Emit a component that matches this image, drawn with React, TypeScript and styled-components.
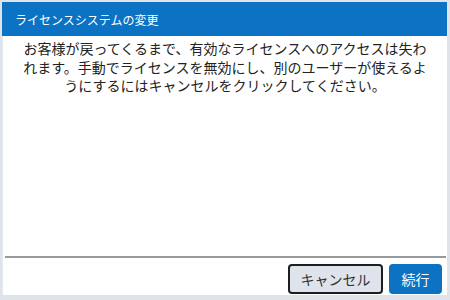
import React from 'react';
import styled, { createGlobalStyle } from 'styled-components';

const GlobalStyle = createGlobalStyle`
  html, body {
    margin: 0;
    padding: 0;
    background: #dfe3ea;
  }
  body {
    font-family: "Noto Sans CJK JP", "Noto Sans", sans-serif;
  }
`;

const Frame = styled.div`
  width: 450px;
  height: 300px;
  padding: 2px 3px 5px 2px;
  box-sizing: border-box;
`;

const Window = styled.div`
  height: 100%;
  display: flex;
  flex-direction: column;
  background: #ffffff;
  border-left: 1px solid #e4e9f2;
`;

const Header = styled.div`
  height: 34px;
  flex: none;
  display: flex;
  align-items: center;
  padding-left: 13px;
  margin-left: -1px;
  background: #0b72c4;
  color: #ffffff;
  font-size: 12px;
`;

const Body = styled.div`
  flex: 1;
  padding: 3px 0 0;
`;

const Message = styled.p`
  width: 410px;
  margin: 0 auto;
  text-align: center;
  font-size: 14px;
  line-height: 18.5px;
  color: #222222;
`;

const Divider = styled.div`
  height: 2px;
  margin: 0 1px 0 2px;
  background: #999999;
`;

const Footer = styled.div`
  display: flex;
  justify-content: flex-end;
  gap: 6px;
  padding: 6px 5px 1px 0;
`;

const Button = styled.button<{ $primary?: boolean }>`
  height: 30px;
  padding: 0;
  width: ${p => (p.$primary ? '53px' : '95px')};
  border-radius: 4px;
  border: 2px solid ${p => (p.$primary ? '#0b72c4' : '#1e1e1e')};
  background: ${p => (p.$primary ? '#0b72c4' : '#dfe3ec')};
  color: ${p => (p.$primary ? '#ffffff' : '#333333')};
  font-family: "Noto Sans CJK JP", "Noto Sans", sans-serif;
  font-size: 14px;
  line-height: 1;
`;

const App = () => {
  return (
    <Frame>
      <GlobalStyle />
      <Window>
        <Header>ライセンスシステムの変更</Header>
        <Body>
          <Message>
            お客様が戻ってくるまで、有効なライセンスへのアクセスは失われます。手動でライセンスを無効にし、別のユーザーが使えるようにするにはキャンセルをクリックしてください。
          </Message>
        </Body>
        <Divider />
        <Footer>
          <Button>キャンセル</Button>
          <Button $primary>続行</Button>
        </Footer>
      </Window>
    </Frame>
  );
};

export default App;
